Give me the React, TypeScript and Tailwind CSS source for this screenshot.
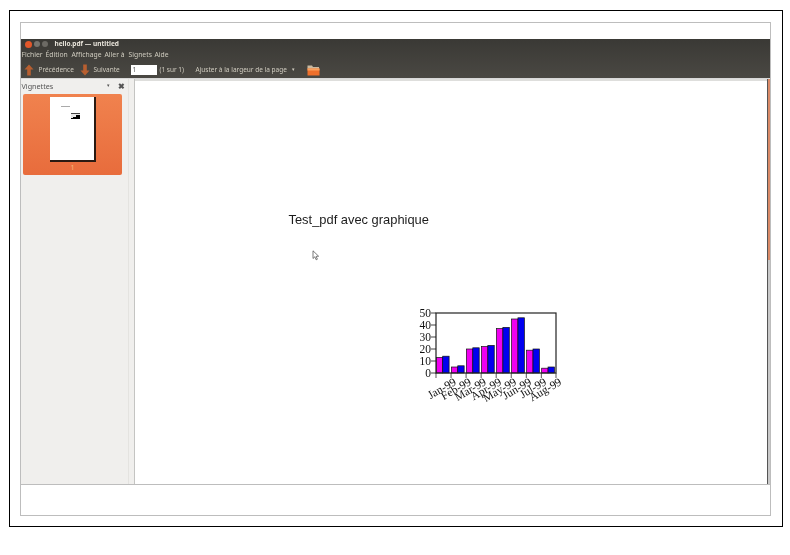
import React from 'react';

const menus = [
    { label: 'Fichier', width: 'w-[24px]' },
    { label: 'Édition', width: 'w-[26px]' },
    { label: 'Affichage', width: 'w-[33px]' },
    { label: 'Aller à', width: 'w-[24px]' },
    { label: 'Signets', width: 'w-[26px]' },
    { label: 'Aide', width: 'w-[18px]' },
];

const series = [
    { month: 'Jan-99', a: 13, b: 14 },
    { month: 'Feb-99', a: 5, b: 6 },
    { month: 'Mar-99', a: 20, b: 21 },
    { month: 'Apr-99', a: 22, b: 23 },
    { month: 'May-99', a: 37, b: 38 },
    { month: 'Jun-99', a: 45, b: 46 },
    { month: 'Jul-99', a: 19, b: 20 },
    { month: 'Aug-99', a: 4, b: 5 },
];

function Chart() {
    const x0 = 21;
    const y0 = 68;
    const step = 15.05;
    return (
        <svg width="165" height="105" viewBox="0 0 165 105" className="blur-[0.4px]">
            {series.map((s, i) => {
                const x = x0 + 0.3 + i * step;
                return (
                    <g key={s.month} stroke="#111" strokeWidth="0.7">
                        <rect x={x} y={y0 - s.a * 1.2} width="6.4" height={s.a * 1.2} fill="#f000f0" />
                        <rect x={x + 6.4} y={y0 - s.b * 1.2} width="6.4" height={s.b * 1.2} fill="#0000f0" />
                        <line x1={x0 + i * step} y1={y0} x2={x0 + i * step} y2={y0 + 5} />
                    </g>
                );
            })}
            <rect x={x0} y={y0 - 60} width="120" height="60" fill="none" stroke="#222" strokeWidth="1.2" />
            <line x1={x0 + 120} y1={y0} x2={x0 + 120} y2={y0 + 5} stroke="#111" strokeWidth="0.7" />
            {[0, 10, 20, 30, 40, 50].map((v) => (
                <g key={v}>
                    <line x1={x0 - 5} y1={y0 - v * 1.2} x2={x0} y2={y0 - v * 1.2} stroke="#111" strokeWidth="0.8" />
                    <text
                        x={x0 - 5}
                        y={y0 - v * 1.2 + 4}
                        textAnchor="end"
                        fontSize="11.5"
                        fill="#111"
                        fontFamily="'Liberation Serif', serif"
                    >
                        {v}
                    </text>
                </g>
            ))}
            {series.map((s, i) => (
                <text
                    key={s.month}
                    transform={`translate(${x0 + 21 + i * step} ${y0 + 11}) rotate(-30)`}
                    textAnchor="end"
                    fontSize="11.5"
                    fill="#111"
                    fontFamily="'Liberation Serif', serif"
                >
                    {s.month}
                </text>
            ))}
        </svg>
    );
}

function ArrowIcon({ down }: { down?: boolean }) {
    return (
        <svg width="10" height="12" viewBox="0 0 10 12" className={down ? 'rotate-180' : ''}>
            <path d="M5 0.5 L9.5 5.5 L6.8 5.5 L6.8 11.5 L3.2 11.5 L3.2 5.5 L0.5 5.5 Z" fill="#b85f30" />
        </svg>
    );
}

function FolderIcon() {
    return (
        <svg width="13" height="11" viewBox="0 0 13 11">
            <path d="M0.5 0.5 L5 0.5 L6 2 L12 2 L12 4 L0.5 4 Z" fill="#c9b9a0" />
            <path d="M0.5 3.5 L12.5 3.5 L12.5 10.5 L0.5 10.5 Z" fill="#ee6f2b" />
            <path d="M0.5 3.5 L12.5 3.5 L12.5 5.5 L0.5 5.5 Z" fill="#f8a05e" />
        </svg>
    );
}

function Thumbnail() {
    return (
        <div className="flex flex-col items-center h-[81px] w-[99px] ml-[2px] mt-[2px] rounded-[2px] bg-gradient-to-b from-[#f0824e] to-[#e86c3c] pt-[3px] pl-px">
            <div className="flex flex-col w-[46px] h-[65px] bg-white border-r-2 border-b-2 border-[#2a1a12]">
                <div className="h-px w-[9px] bg-[#aaa] ml-[11px] mt-[9px]" />
                <div className="flex items-end h-[6px] w-[9px] bg-[#e8e8e8] border-t border-[#444] ml-[21px] mt-[6px]">
                    <div className="w-[2px] h-[1px] bg-black" />
                    <div className="w-[3px] h-[2px] bg-black" />
                    <div className="w-[4px] h-[4px] bg-black" />
                </div>
            </div>
            <span className="text-[7px] leading-[10px] mt-[1px] text-[#f8b878] font-['Noto_Sans',sans-serif]">1</span>
        </div>
    );
}

export default function App() {
    return (
        <div className="w-[790px] h-[555px] bg-white overflow-hidden pl-[9px] pt-[10px] relative">
            <div className="w-[774px] h-[517px] border-[1.5px] border-black pl-[9.5px] pt-[10.5px]">
                <div className="flex flex-col w-[751px] h-[494px] border border-[#bdbdbd] bg-white">
                    <div className="h-[16px] shrink-0" />
                    <div className="flex flex-col h-[39px] shrink-0 bg-gradient-to-b from-[#3a3935] to-[#4a4843] text-[#cfcbbf] font-['Noto_Sans',sans-serif] blur-[0.45px]">
                        <div className="flex items-center h-[11px] pl-[4px] gap-[2px]">
                            <span className="w-[7px] h-[7px] rounded-full bg-[#e2572a]" />
                            <span className="w-[6px] h-[6px] rounded-full bg-[#77756e]" />
                            <span className="w-[6px] h-[6px] rounded-full bg-[#6c6a64]" />
                            <span className="ml-[5px] text-[6.5px] font-bold text-[#e8e4da]">hello.pdf — untitled</span>
                        </div>
                        <div className="flex items-center h-[11px] pt-px text-[6.8px] whitespace-nowrap">
                            {menus.map((m) => (
                                <span key={m.label} className={`${m.width} pl-px`}>
                                    {m.label}
                                </span>
                            ))}
                        </div>
                        <div className="flex items-center h-[17px] pt-[2px] pl-[3px] text-[6.5px] whitespace-nowrap">
                            <ArrowIcon />
                            <span className="ml-[5px] w-[41px]">Précédence</span>
                            <ArrowIcon down />
                            <span className="ml-[4px] w-[37px]">Suivante</span>
                            <span className="w-[26px] h-[10px] bg-white text-[#555] pl-[2px] leading-[10px]">1</span>
                            <span className="ml-[3px] w-[36px]">(1 sur 1)</span>
                            <span className="w-[96px]">Ajuster à la largeur de la page</span>
                            <span className="w-[15px] text-[5px]">▾</span>
                            <FolderIcon />
                        </div>
                    </div>
                    <div className="flex flex-1 min-h-0 border-t border-[#d8d8d8]">
                        <div className="flex flex-col w-[107px] shrink-0 bg-[#f0efed]">
                            <div className="flex items-center h-[13px] pt-[2px] pl-px text-[7.2px] text-[#555] font-['Noto_Sans',sans-serif] blur-[0.3px]">
                                <span className="flex-1">Vignettes</span>
                                <span className="text-[5px] mr-[8px]">▾</span>
                                <span className="text-[8px] font-bold mr-[3px] leading-none">✖</span>
                            </div>
                            <Thumbnail />
                        </div>
                        <div className="w-[7px] shrink-0 bg-[#f0efed] border-l border-[#e4e3e0] border-r border-r-[#c4c4c2]" />
                        <div className="flex-1 min-w-0 bg-white">
                            <div className="h-[2px] bg-[#dededc]" />
                            <div className="pl-[154px] pt-[130px] text-[12.9px] leading-[17px] text-[#1c1c1c] font-['Liberation_Sans',sans-serif] blur-[0.2px]">
                                Test_pdf avec graphique
                            </div>
                            <div className="pl-[280px] pt-[77px]">
                                <Chart />
                            </div>
                        </div>
                        <div className="flex flex-col w-[3px] shrink-0 border-l border-[#555]">
                            <div className="h-[181px] bg-[#d98a68]" />
                            <div className="flex-1 bg-[#c9c9c9]" />
                        </div>
                    </div>
                    <div className="h-[31px] shrink-0 border-t border-[#bdbdbd]" />
                </div>
            </div>
            {/* mouse pointer over the page */}
            <svg width="8" height="11" viewBox="0 0 8 11" className="absolute left-[311.5px] top-[249.5px]">
                <path d="M1 0.8 L1 8.5 L2.8 6.8 L4.2 9.8 L5.4 9.2 L4.1 6.4 L6.6 6.2 Z" fill="#fff" stroke="#444" strokeWidth="0.7" />
            </svg>
        </div>
    );
}
